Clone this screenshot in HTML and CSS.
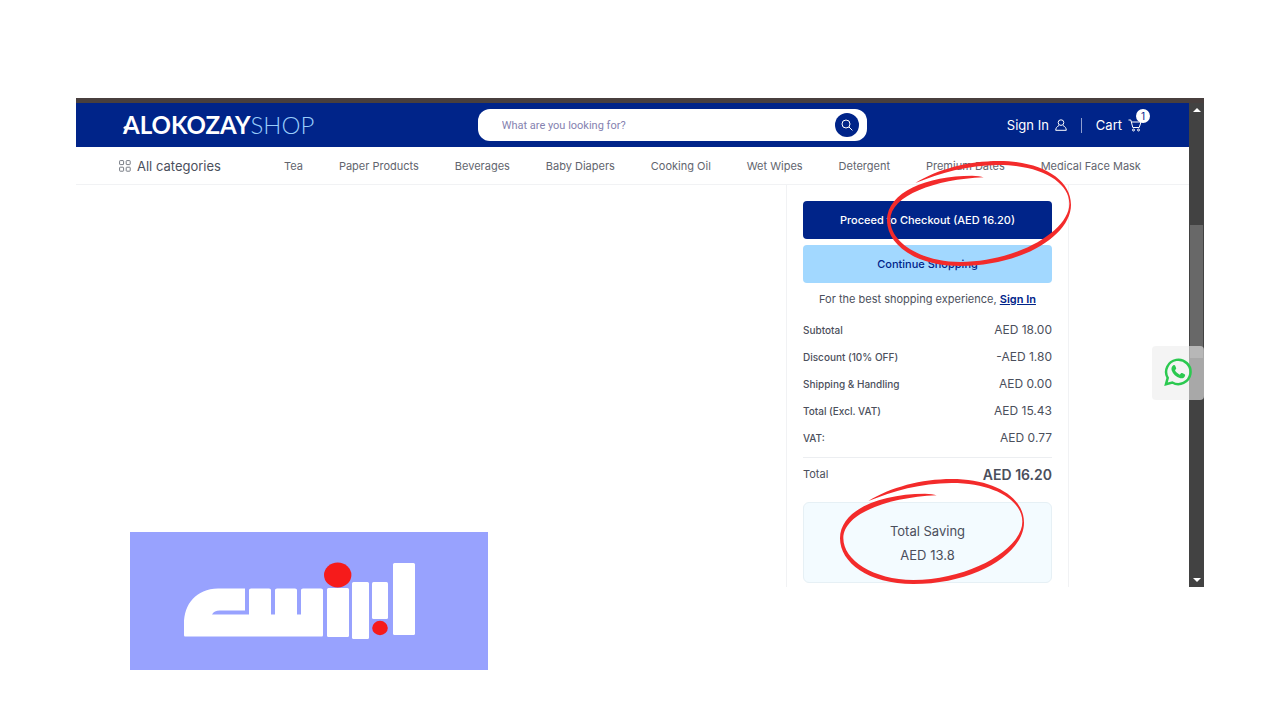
FILE: index.html
```html
<!DOCTYPE html>
<html lang="en">
<head>
<meta charset="utf-8">
<meta name="viewport" content="width=device-width, initial-scale=1">
<title>Alokozay Shop – Cart</title>
<link rel="stylesheet" href="styles.css">
</head>
<body>
<main class="stage">
  <div class="window">
    <div class="page">
      <header class="topbar">
        <a class="logo" href="#"><svg class="logo-swash" viewBox="0 0 14 6" aria-hidden="true"><path d="M1 3.500C2 1.500 4 1.500 6 3S11 4 13 2.500"/></svg><span class="logo-main">ALOKOZAY</span><span class="logo-sub">SHOP</span></a>
        <form class="search">
          <input class="search-input" type="search" aria-label="Search" placeholder="What are you looking for?">
          <button class="search-button" type="button" aria-label="Search">
            <svg viewBox="0 0 12 12" width="12" height="12"><circle cx="5" cy="5" r="4"/><path d="M8 8l3.400 3.400"/></svg>
          </button>
        </form>
        <div class="account">
          <a class="account-link" href="#">Sign In
            <svg viewBox="0 0 12 12" width="12" height="12"><circle cx="6" cy="3.600" r="2.800"/><path d="M4 6.500C2 7.500.8 9 .7 11.300h10.600C11.200 9 10 7.500 8 6.500"/></svg>
          </a>
          <span class="account-divider"></span>
          <a class="account-link cart-link" href="#">Cart
            <svg viewBox="0 0 14 14" width="14" height="14"><path d="M.5 2h2.300l2 7.500h6.400L13 4H3.400"/><circle cx="5.500" cy="12" r="1"/><circle cx="10.500" cy="12" r="1"/></svg>
            <span class="cart-count">1</span>
          </a>
        </div>
      </header>
      <nav class="nav">
        <a class="all" href="#">
          <svg viewBox="0 0 12 12" width="12" height="12"><rect x=".6" y=".6" width="4" height="4" rx=".6"/><rect x="7.200" y=".6" width="4" height="4" rx=".6"/><rect x=".6" y="7.200" width="4" height="4" rx=".6"/><rect x="7.200" y="7.200" width="4" height="4" rx=".6"/></svg>
          All categories</a>
        <ul class="links">
          <li><a href="#">Tea</a></li>
          <li><a href="#">Paper Products</a></li>
          <li><a href="#">Beverages</a></li>
          <li><a href="#">Baby Diapers</a></li>
          <li><a href="#">Cooking Oil</a></li>
          <li><a href="#">Wet Wipes</a></li>
          <li><a href="#">Detergent</a></li>
          <li><a href="#">Premium Dates</a></li>
          <li><a href="#">Medical Face Mask</a></li>
        </ul>
      </nav>
      <div class="content">
        <section class="summary">
          <button class="btn btn-primary" type="button">Proceed to Checkout (AED 16.20)</button>
          <button class="btn btn-secondary" type="button">Continue Shopping</button>
          <p class="hint">For the best shopping experience, <a href="#">Sign In</a></p>
          <dl class="lines">
            <div class="line"><dt>Subtotal</dt><dd>AED 18.00</dd></div>
            <div class="line"><dt>Discount (10% OFF)</dt><dd>-AED 1.80</dd></div>
            <div class="line"><dt>Shipping &amp; Handling</dt><dd>AED 0.00</dd></div>
            <div class="line"><dt>Total (Excl. VAT)</dt><dd>AED 15.43</dd></div>
            <div class="line"><dt>VAT:</dt><dd>AED 0.77</dd></div>
            <div class="line line-total"><dt>Total</dt><dd>AED 16.20</dd></div>
          </dl>
          <div class="saving"><span>Total Saving</span><span>AED 13.8</span></div>
          <svg class="ring ring-checkout" viewBox="174 81 564 324" aria-hidden="true"><use href="#ring"/></svg>
          <svg class="ring ring-saving" viewBox="174 81 564 324" aria-hidden="true">
            <path id="ring" d="M265 153C330 112 425 87 515 87C640 87 732 140 732 218C732 310 585 402 400 402C265 402 180 338 180 265C180 180 300 131 435 131Q458 132 470 136C325 142 190 190 190 265C190 330 280 390 400 390C575 388 727 295 727 215C727 150 640 99 515 99C420 99 340 124 265 153Z"/>
          </svg>
        </section>
      </div>
    </div>
    <div class="scrollbar" aria-hidden="true">
      <span class="arrow arrow-up"></span>
      <span class="track"><span class="thumb"></span></span>
      <span class="arrow arrow-down"></span>
    </div>
    <a class="whatsapp" href="#" aria-label="WhatsApp">
      <svg viewBox="0 0 28 28" width="28" height="28"><path class="wa-bubble" d="M2 26.200l1.700-6.300A12.200 12.200 0 1 1 8.300 24.500Z"/><path class="wa-phone" d="M9.300 7.300c.7-.6 1.500-.4 1.800.3l1 2.400c.2.500.1.900-.3 1.300l-.8 1c1 2 2.700 3.500 4.800 4.400l1.200-1.400c.3-.4.7-.5 1.200-.3l2.400 1.200c.5.300.6.700.5 1.200-.5 2.200-2.700 3.300-4.700 2.800-4.600-1.200-7.400-4-8.700-7.600-.7-2 .1-4.200 1.600-5.300Z"/></svg>
    </a>
  </div>
  <svg class="brand" viewBox="0 0 358 138" role="img" aria-label="Brand logo">
    <rect width="358" height="138" fill="#98a2fe"/>
    <g fill="#fff">
      <path d="M55 104.500H192Q193 104.500 193 103V58Q193 56.500 191 56.500H173Q171 56.500 171 58V82.500H167V58Q167 56.500 165 56.500H147Q145 56.500 145 58V82.500H141V58Q141 56.500 139 56.500H121Q119 56.500 119 58V82.500H82Q84 78.500 90 78.500H115V56.500H88C66 57 54 72 54 92V103Q54 104.500 55 104.500Z"/>
      <rect x="197" y="56" width="22" height="49" rx="1.500"/>
      <rect x="222" y="50" width="17" height="57" rx="1.500"/>
      <rect x="242" y="50" width="16" height="37" rx="1.500"/>
      <rect x="263" y="31" width="22" height="72" rx="1.500"/>
    </g>
    <ellipse cx="207.700" cy="43" rx="13.700" ry="12.500" fill="#f61b1b"/>
    <ellipse cx="250" cy="96" rx="7.800" ry="7.200" fill="#f61b1b"/>
  </svg>
</main>
</body>
</html>
```
FILE: styles.css
```css
* { box-sizing: border-box; }

body {
  margin: 0;
  background: #fff;
  color: #4b4f5c;
  font-family: Inter, "Liberation Sans", sans-serif;
  font-size: 11px;
}

a { color: inherit; text-decoration: none; }
button { font: inherit; border: 0; cursor: pointer; }
svg { flex: none; }

.stage { position: relative; padding: 98px 76px 133px; }

.window {
  position: relative;
  display: flex;
  border-top: 5px solid #483f3e;
}
.page { flex: 1; min-width: 0; }

.topbar {
  display: grid;
  grid-template-columns: 355fr 390fr 275fr;
  align-items: center;
  height: 44px;
  padding: 0 47px;
  background: #002489;
  color: #fff;
}
.logo {
  position: relative;
  font-family: Lato, sans-serif;
  font-size: 24px;
  line-height: 44px;
}
.logo-main { font-weight: 700; }
.logo-sub { font-weight: 300; color: #98cdfb; }
.logo-swash {
  position: absolute;
  left: 0;
  top: 22px;
  width: 14px;
  height: 6px;
  fill: none;
  stroke: #fff;
  stroke-width: 2;
}

.search {
  display: flex;
  align-items: center;
  height: 32px;
  padding: 0 8px 0 24px;
  border-radius: 12px;
  background: #fff;
}
.search-input {
  flex: 1;
  min-width: 0;
  padding: 0;
  border: 0;
  outline: 0;
  background: none;
  font: 11px Roboto, sans-serif;
}
.search-input::placeholder { color: #8582b0; opacity: 1; }
.search-button {
  display: grid;
  place-items: center;
  width: 24px;
  height: 24px;
  padding: 0;
  border-radius: 50%;
  background: #002489;
}
.search-button svg { fill: none; stroke: #fff; stroke-width: 1; }

.account {
  display: flex;
  justify-content: flex-end;
  align-items: center;
  gap: 14px;
  font-size: 13px;
}
.account-link { display: flex; align-items: center; gap: 6px; }
.account-link svg { fill: none; stroke: #fff; stroke-width: 1; }
.account-divider { width: 1px; height: 15px; background: #8f9fcf; }
.cart-link { position: relative; }
.cart-count {
  position: absolute;
  right: -8px;
  top: -8px;
  width: 14px;
  height: 14px;
  border-radius: 50%;
  background: #fff;
  color: #002489;
  font-size: 10px;
  line-height: 14px;
  text-align: center;
}

.nav {
  display: flex;
  align-items: center;
  height: 38px;
  padding: 0 48px 0 43px;
  border-bottom: 1px solid #f1f2f4;
}
.all {
  display: flex;
  align-items: center;
  gap: 6px;
  width: 165px;
  font-size: 13px;
}
.all svg { fill: none; stroke: #777b84; stroke-width: 1; }
.links {
  flex: 1;
  display: flex;
  justify-content: space-between;
  margin: 0;
  padding: 0;
  list-style: none;
  white-space: nowrap;
  color: #62656e;
}

.content { display: flex; justify-content: flex-end; padding-right: 120px; }
.summary {
  position: relative;
  width: 283px;
  padding: 16px 16px 4px;
  border: solid #f1f2f4;
  border-width: 0 1px;
}
.btn {
  display: block;
  width: 100%;
  height: 38px;
  border-radius: 4px;
  font-weight: 500;
}
.btn-primary { background: #002489; color: #fff; }
.btn-secondary { margin-top: 6px; background: #a2d8ff; color: #002489; }
.hint { margin: 0; line-height: 33px; text-align: center; white-space: nowrap; }
.hint a { color: #002489; font-weight: 600; text-decoration: underline; }

.lines { margin: 0; }
.line {
  display: flex;
  justify-content: space-between;
  align-items: center;
  height: 27px;
}
.line dt { font-size: 10px; font-weight: 500; }
.line dd { margin: 0; font-size: 12px; }
.line-total { height: 33px; margin-top: 6px; border-top: 1px solid #eceef1; }
.line-total dt { font-size: 11px; font-weight: 400; }
.line-total dd { font-size: 14px; font-weight: 600; }

.saving {
  display: flex;
  flex-direction: column;
  align-items: center;
  margin-top: 12px;
  padding: 16px 0 15px;
  border: 1px solid #e6f0f5;
  border-radius: 6px;
  background: #f3fbff;
  font-size: 13px;
  line-height: 24px;
}

/* Hand-drawn highlights over the amounts */
.ring {
  position: absolute;
  width: 188px;
  height: 108px;
  fill: #f32b2b;
}
.ring-checkout { left: 98px; top: -26px; }
.ring-saving { left: 51px; top: 292px; }

.scrollbar {
  display: flex;
  flex-direction: column;
  align-items: center;
  width: 15px;
  padding: 5px 0;
  background: #424242;
}
.arrow { border: 4px solid transparent; }
.arrow-up { border-top-width: 0; border-bottom-color: #fff; }
.arrow-down { border-bottom-width: 0; border-top-color: #fff; }
.track { flex: 1; align-self: stretch; padding: 0 1px; }
.thumb {
  display: block;
  height: 133px;
  margin-top: 113px;
  background: #686868;
}

.whatsapp {
  position: absolute;
  right: 0;
  top: 243px;
  display: grid;
  place-items: center;
  width: 52px;
  height: 54px;
  padding-bottom: 3px;
  border-radius: 4px;
  background: rgba(236, 236, 236, 0.6);
}
.wa-bubble { fill: none; stroke: #2bc950; stroke-width: 2.500; }
.wa-phone { fill: #2bc950; }

.brand {
  position: absolute;
  left: 130px;
  top: 532px;
  width: 358px;
  height: 138px;
}
```
